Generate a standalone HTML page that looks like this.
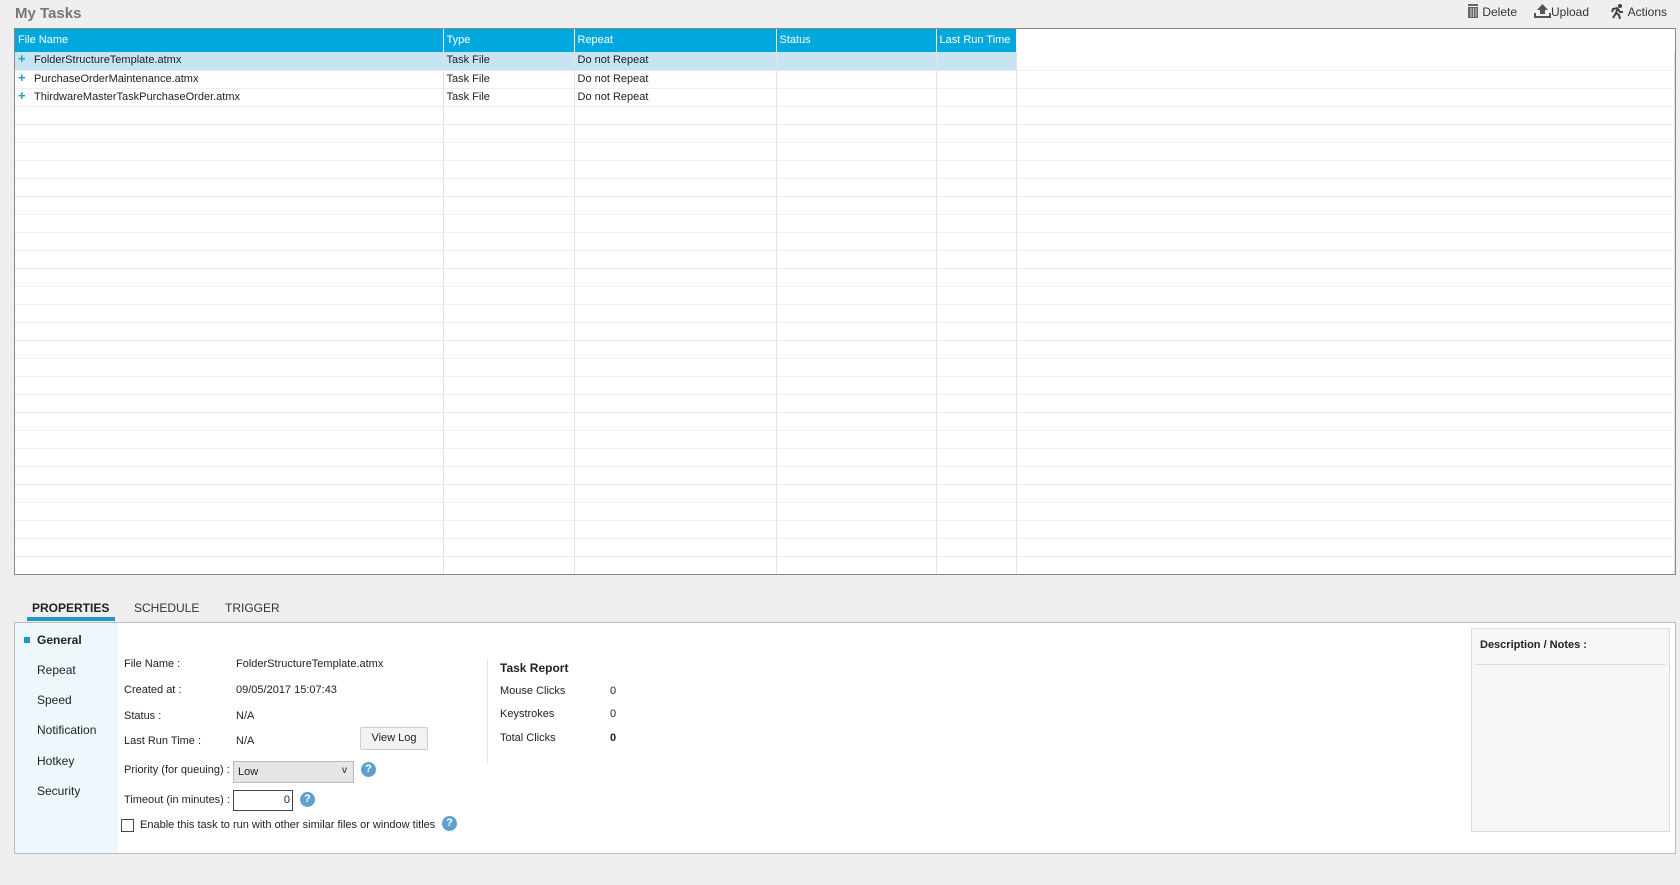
<!DOCTYPE html>
<html><head><style>
*{margin:0;padding:0;box-sizing:border-box}
body{width:1680px;height:885px;background:#efefef;font-family:"Liberation Sans",Arial,sans-serif;position:relative;overflow:hidden;color:#222}
.a{position:absolute;white-space:nowrap}
#title{left:15px;top:5px;font-size:15px;font-weight:bold;color:#777}
.tb{font-size:12px;color:#333;top:4px}
#grid{left:14px;top:28px;width:1662px;height:547px;border:1px solid #888;background:#fff;overflow:hidden}
table{border-collapse:collapse;font-size:11px;position:absolute;left:0;top:0;width:1660px;table-layout:fixed}
td,th{height:18px;line-height:17px;border-right:1px solid #e2e2e2;border-bottom:1px solid #eee;padding:0 3px;text-align:left;font-weight:normal;color:#222;white-space:nowrap;overflow:hidden;vertical-align:middle}
th{background:#00a8dd;color:#fff;height:23px;border-right:1px solid #fff;border-bottom:none}
tr.sel td{background:#c6e5f1}
.plus{color:#1a9ac9;font-weight:bold;font-size:13px;line-height:10px;margin-right:6px;display:inline-block;width:10px;vertical-align:0}
#panel{left:14px;top:622px;width:1662px;height:232px;border:1px solid #bbb;background:#fff}
#nav{left:15px;top:623px;width:103px;height:230px;background:#eef8fc}
.nav{font-size:12px;left:37px;color:#222}
.tab{font-size:12px;top:601px;color:#333}
.lab{font-size:11px;left:124px}
.val{font-size:11px;left:236px}
.q{width:15px;height:15px;border-radius:50%;background:#5fa0d0;color:#fff;font-size:11px;font-weight:bold;text-align:center;line-height:15px}
</style></head><body>
<div class="a" id="title">My Tasks</div>
<div class="a tb" style="left:1467px"><svg width="12" height="14" style="vertical-align:-2px"><rect x="1" y="0" width="10" height="2" fill="#666"/><rect x="1" y="3" width="10" height="11" fill="#666"/><rect x="3.5" y="4" width="1" height="9" fill="#ccc"/><rect x="6" y="4" width="1" height="9" fill="#ccc"/><rect x="8.5" y="4" width="1" height="9" fill="#ccc"/></svg> Delete</div>
<div class="a tb" style="left:1534px"><svg width="17" height="14" style="vertical-align:-2px"><path d="M8.5 0L3 6h3v4h5V6h3z" fill="#555"/><path d="M0 9v5h17V9h-2v3H2V9z" fill="#555"/></svg>Upload</div>
<div class="a tb" style="left:1609px"><svg width="16" height="15" style="vertical-align:-3px"><circle cx="11" cy="2" r="2" fill="#444"/><path d="M9 4L4 5 3 8M9 4l-2 5 3 2 1 4M7 9l-3 5M9 5l2 3 3 0" stroke="#444" stroke-width="2" fill="none"/></svg> Actions</div>
<div class="a" id="grid"><table>
<colgroup><col style="width:428px"><col style="width:131px"><col style="width:202px"><col style="width:160px"><col style="width:80px"><col></colgroup>
<tr><th>File Name</th><th>Type</th><th>Repeat</th><th>Status</th><th>Last Run Time</th><th style="border:none;background:#fff"></th></tr>
<tr class="sel"><td><span class="plus">+</span>FolderStructureTemplate.atmx</td><td>Task File</td><td>Do not Repeat</td><td></td><td></td><td style="background:#fff"></td></tr>
<tr><td><span class="plus">+</span>PurchaseOrderMaintenance.atmx</td><td>Task File</td><td>Do not Repeat</td><td></td><td></td><td></td></tr>
<tr><td><span class="plus">+</span>ThirdwareMasterTaskPurchaseOrder.atmx</td><td>Task File</td><td>Do not Repeat</td><td></td><td></td><td></td></tr>
<tr><td></td><td></td><td></td><td></td><td></td><td></td></tr><tr><td></td><td></td><td></td><td></td><td></td><td></td></tr><tr><td></td><td></td><td></td><td></td><td></td><td></td></tr><tr><td></td><td></td><td></td><td></td><td></td><td></td></tr><tr><td></td><td></td><td></td><td></td><td></td><td></td></tr><tr><td></td><td></td><td></td><td></td><td></td><td></td></tr><tr><td></td><td></td><td></td><td></td><td></td><td></td></tr><tr><td></td><td></td><td></td><td></td><td></td><td></td></tr><tr><td></td><td></td><td></td><td></td><td></td><td></td></tr><tr><td></td><td></td><td></td><td></td><td></td><td></td></tr><tr><td></td><td></td><td></td><td></td><td></td><td></td></tr><tr><td></td><td></td><td></td><td></td><td></td><td></td></tr><tr><td></td><td></td><td></td><td></td><td></td><td></td></tr><tr><td></td><td></td><td></td><td></td><td></td><td></td></tr><tr><td></td><td></td><td></td><td></td><td></td><td></td></tr><tr><td></td><td></td><td></td><td></td><td></td><td></td></tr><tr><td></td><td></td><td></td><td></td><td></td><td></td></tr><tr><td></td><td></td><td></td><td></td><td></td><td></td></tr><tr><td></td><td></td><td></td><td></td><td></td><td></td></tr><tr><td></td><td></td><td></td><td></td><td></td><td></td></tr><tr><td></td><td></td><td></td><td></td><td></td><td></td></tr><tr><td></td><td></td><td></td><td></td><td></td><td></td></tr><tr><td></td><td></td><td></td><td></td><td></td><td></td></tr><tr><td></td><td></td><td></td><td></td><td></td><td></td></tr><tr><td></td><td></td><td></td><td></td><td></td><td></td></tr><tr><td></td><td></td><td></td><td></td><td></td><td></td></tr><tr><td></td><td></td><td></td><td></td><td></td><td></td></tr>
</table></div>

<div class="a tab" style="left:32px;font-weight:bold;color:#222">PROPERTIES</div>
<div class="a" style="left:27px;top:617px;width:88px;height:4px;background:#1a9ac9"></div>
<div class="a tab" style="left:134px">SCHEDULE</div>
<div class="a tab" style="left:225px">TRIGGER</div>
<div class="a" id="panel"></div>
<div class="a" id="nav"></div>
<div class="a" style="left:24px;top:637px;width:6px;height:6px;background:#1a9ac9"></div>
<div class="a nav" style="top:633px;font-weight:bold">General</div>
<div class="a nav" style="top:663px">Repeat</div>
<div class="a nav" style="top:693px">Speed</div>
<div class="a nav" style="top:723px">Notification</div>
<div class="a nav" style="top:754px">Hotkey</div>
<div class="a nav" style="top:784px">Security</div>

<div class="a lab" style="top:658px">File Name :</div><div class="a val" style="top:658px">FolderStructureTemplate.atmx</div>
<div class="a lab" style="top:684px">Created at :</div><div class="a val" style="top:684px">09/05/2017 15:07:43</div>
<div class="a lab" style="top:710px">Status :</div><div class="a val" style="top:710px">N/A</div>
<div class="a lab" style="top:735px">Last Run Time :</div><div class="a val" style="top:735px">N/A</div>
<div class="a" style="left:360px;top:727px;width:68px;height:23px;border:1px solid #ccc;background:#f2f2f2;border-radius:2px;font-size:11px;text-align:center;line-height:21px">View Log</div>
<div class="a lab" style="top:764px">Priority (for queuing) :</div>
<div class="a" style="left:233px;top:761px;width:121px;height:22px;border:1px solid #bbb;background:#e6e6e6;font-size:11px;padding:4px 4px;">Low<span style="position:absolute;right:6px;top:3px;font-size:10px">v</span></div>
<div class="a q" style="left:361px;top:762px">?</div>
<div class="a lab" style="top:794px">Timeout (in minutes) :</div>
<div class="a" style="left:233px;top:790px;width:60px;height:21px;border:1px solid #444;background:#fff;font-size:11px;text-align:right;padding:3px 2px">0</div>
<div class="a q" style="left:300px;top:792px">?</div>
<div class="a" style="left:121px;top:819px;width:13px;height:13px;border:1px solid #444;background:#fff"></div>
<div class="a lab" style="left:140px;top:819px">Enable this task to run with other similar files or window titles</div>
<div class="a q" style="left:442px;top:816px">?</div>

<div class="a" style="left:487px;top:659px;width:1px;height:104px;background:#e4e4e4"></div>
<div class="a" style="left:500px;top:661px;font-size:12px;font-weight:bold">Task Report</div>
<div class="a lab" style="left:500px;top:685px">Mouse Clicks</div><div class="a lab" style="left:610px;top:685px">0</div>
<div class="a lab" style="left:500px;top:708px">Keystrokes</div><div class="a lab" style="left:610px;top:708px">0</div>
<div class="a lab" style="left:500px;top:732px">Total Clicks</div><div class="a lab" style="left:610px;top:732px;font-weight:bold">0</div>

<div class="a" style="left:1471px;top:628px;width:199px;height:204px;border:1px solid #ddd;background:#f7f7f7"></div>
<div class="a" style="left:1480px;top:639px;font-size:11px;font-weight:bold">Description / Notes :</div>
<div class="a" style="left:1476px;top:664px;width:190px;height:1px;background:#ddd"></div>
</body></html>
